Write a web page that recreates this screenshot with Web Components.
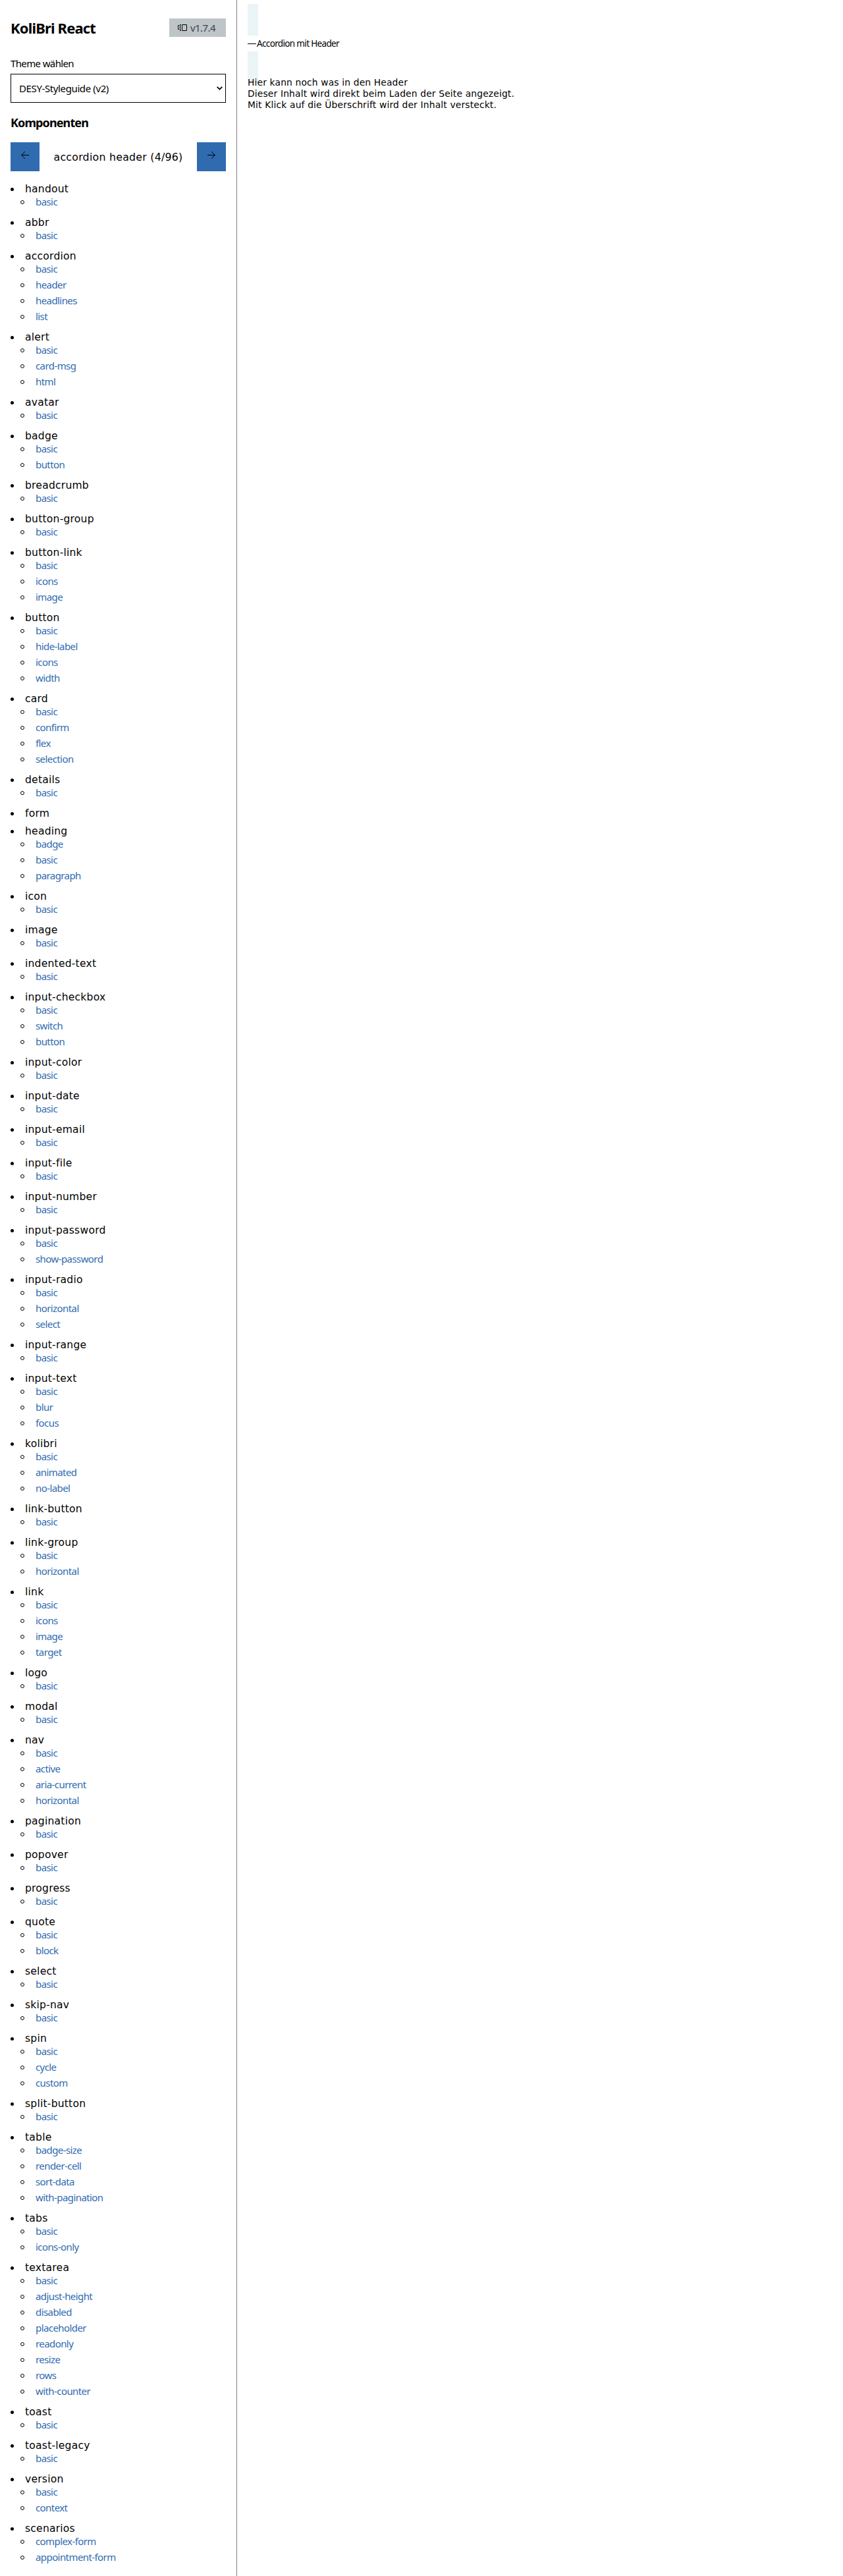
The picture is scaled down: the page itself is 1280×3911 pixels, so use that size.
<!DOCTYPE html>
<html lang="de"><head><meta charset="utf-8"><title>KoliBri React</title>
<style>html,body{margin:0;background:#fff}body{font-family:"DejaVu Sans",Verdana,sans-serif;color:#000}</style></head>
<body><app-shell><app-sidebar slot="side"></app-sidebar><accordion-sample slot="main"></accordion-sample></app-shell>
<script>
const define=(name,html,setup)=>customElements.define(name,class extends HTMLElement{
  constructor(){super();this.attachShadow({mode:'open'}).innerHTML=html;}
  connectedCallback(){if(setup)setup(this,this.shadowRoot);}
});

// Tracks its text so that the run is exactly `w` pixels wide.
define('fit-text',`<style>:host{display:inline-block;white-space:nowrap}span{display:inline-block}</style><span><slot></slot></span>`,(h,r)=>{
  const s=r.querySelector('span'),w=+h.getAttribute('w'),n=h.textContent.length;
  if(w){s.style.letterSpacing='0px';const now=s.getBoundingClientRect().width;s.style.letterSpacing=((w-now)/n).toFixed(3)+'px';}
});

define('app-shell',`<style>:host{display:grid;grid-template-columns:360px 1fr;height:3911px}
.side{box-sizing:border-box;border-right:1px solid #808080;padding:0 16px}.main{padding:6px 16px}</style>
<div class="side"><slot name="side"></slot></div><div class="main"><slot name="main"></slot></div>`);

define('version-badge',`<style>:host{display:flex;align-items:center;gap:5px;box-sizing:border-box;width:86px;height:28px;padding-left:13px;background:#bec5c9;color:#3c4448;font:15px/28px "Noto Sans",sans-serif}
svg{display:block}</style>
<svg width="14" height="10" viewBox="0 0 14 10" fill="none" stroke="#000"><rect x="6.5" y=".5" width="7" height="9" rx=".5"/><path d="M5 .5H3.5v9H5M2 1.5H.5v6H2"/></svg><fit-text w="38">v1.7.4</fit-text>`);

define('theme-select',`<style>:host{display:block}label{display:block;font:15px/20px "Noto Sans",sans-serif}
.box{display:flex;align-items:center;justify-content:space-between;box-sizing:border-box;height:44px;border:1px solid #000;padding:0 4px 0 12px;margin-top:6px;font:15px/42px "Noto Sans",sans-serif}
svg{display:block}</style>
<label><fit-text w="96">Theme wählen</fit-text></label><div class="box"><fit-text w="136">DESY-Styleguide (v2)</fit-text><svg width="9" height="6" viewBox="0 0 9 6" fill="none" stroke="#000" stroke-width="1.8"><path d="M.7.9 4.5 4.6 8.3.9"/></svg></div>`);

define('arrow-button',`<style>:host{display:flex;width:44px;height:44px;background:#306bb0;justify-content:center;padding-top:13px;box-sizing:border-box}
:host([dir-next]) svg{transform:scaleX(-1)}</style>
<svg width="12" height="12" viewBox="0 0 12 12" fill="none" stroke="#000"><path d="M12 6.5H.7M6 1 .7 6.5 6 12"/></svg>`);

define('component-group',`<style>:host{display:block;margin-bottom:8px}
.g,.l{display:flex;align-items:center}
.g{height:19px;font-size:15.6px;line-height:19px;letter-spacing:.2px}
.g span{padding-top:1px}
.g::before{content:"";width:5px;height:5px;border-radius:50%;background:#000;margin:2px 17px 0 0}
.l{height:24px;padding-left:15px;box-sizing:border-box}
.l::before{content:"";width:6px;height:6px;box-sizing:border-box;border:1px solid #000;border-radius:50%;margin:-2px 17px 0 0}
a{color:#306bb0;font:15px/24px "Noto Sans",sans-serif;letter-spacing:-.58px;margin-top:-4px}</style>
<div class="g"><span></span></div><div class="links"></div>`,(h,r)=>{
  r.querySelector('span').textContent=h.getAttribute('label');
  r.querySelector('.links').innerHTML=(h.getAttribute('links')||'').split(' ').filter(Boolean).map(t=>`<div class="l"><a>${t}</a></div>`).join('');
});

const GROUPS=`handout:basic|abbr:basic|accordion:basic header headlines list|alert:basic card-msg html|avatar:basic|badge:basic button|breadcrumb:basic|button-group:basic|button-link:basic icons image|button:basic hide-label icons width|card:basic confirm flex selection|details:basic|form:|heading:badge basic paragraph|icon:basic|image:basic|indented-text:basic|input-checkbox:basic switch button|input-color:basic|input-date:basic|input-email:basic|input-file:basic|input-number:basic|input-password:basic show-password|input-radio:basic horizontal select|input-range:basic|input-text:basic blur focus|kolibri:basic animated no-label|link-button:basic|link-group:basic horizontal|link:basic icons image target|logo:basic|modal:basic|nav:basic active aria-current horizontal|pagination:basic|popover:basic|progress:basic|quote:basic block|select:basic|skip-nav:basic|spin:basic cycle custom|split-button:basic|table:badge-size render-cell sort-data with-pagination|tabs:basic icons-only|textarea:basic adjust-height disabled placeholder readonly resize rows with-counter|toast:basic|toast-legacy:basic|version:basic context|scenarios:complex-form appointment-form`;

define('app-sidebar',`<style>:host{display:flex;flex-direction:column}
header{display:flex;justify-content:space-between;align-items:center;height:28px;margin-top:28px}
h1,h2{margin:0;font-family:"Noto Sans",sans-serif;font-weight:700}
h1{font-size:22px;line-height:28px}h2{font-size:18px;line-height:24px;margin-top:18px}
theme-select{margin-top:30px}
.pager{display:flex;justify-content:space-between;align-items:center;height:44px;margin-top:18px;font-size:15.8px}
nav{margin-top:17px}</style>
<header><h1><fit-text w="129">KoliBri React</fit-text></h1><version-badge></version-badge></header>
<theme-select></theme-select><h2><fit-text w="118">Komponenten</fit-text></h2>
<div class="pager"><arrow-button></arrow-button><fit-text w="196">accordion header (4/96)</fit-text><arrow-button dir-next></arrow-button></div>
<nav></nav>`,(h,r)=>{
  r.querySelector('nav').innerHTML=GROUPS.split('|').map(g=>{const[a,b]=g.split(':');return `<component-group label="${a}" links="${b}"></component-group>`}).join('');
});

define('accordion-sample',`<style>:host{display:block}.block{width:16px;height:48px;background:#ebf4f7}
.head{display:flex;align-items:center;height:24px;font:13.5px/24px "Noto Sans",sans-serif}
.head i{width:13px;height:1px;background:#000;margin-right:1px}
.text{margin-top:-9px;font-size:13.8px;line-height:17px}.text div{height:17px}</style>
<div class="block"></div><div class="head"><i></i><fit-text w="125">Accordion mit Header</fit-text></div><div class="block"></div>
<div class="text"><div><fit-text w="243">Hier kann noch was in den Header</fit-text></div><div><fit-text w="405">Dieser Inhalt wird direkt beim Laden der Seite angezeigt.</fit-text></div><div><fit-text w="378">Mit Klick auf die Überschrift wird der Inhalt versteckt.</fit-text></div></div>`);
</script></body></html>
